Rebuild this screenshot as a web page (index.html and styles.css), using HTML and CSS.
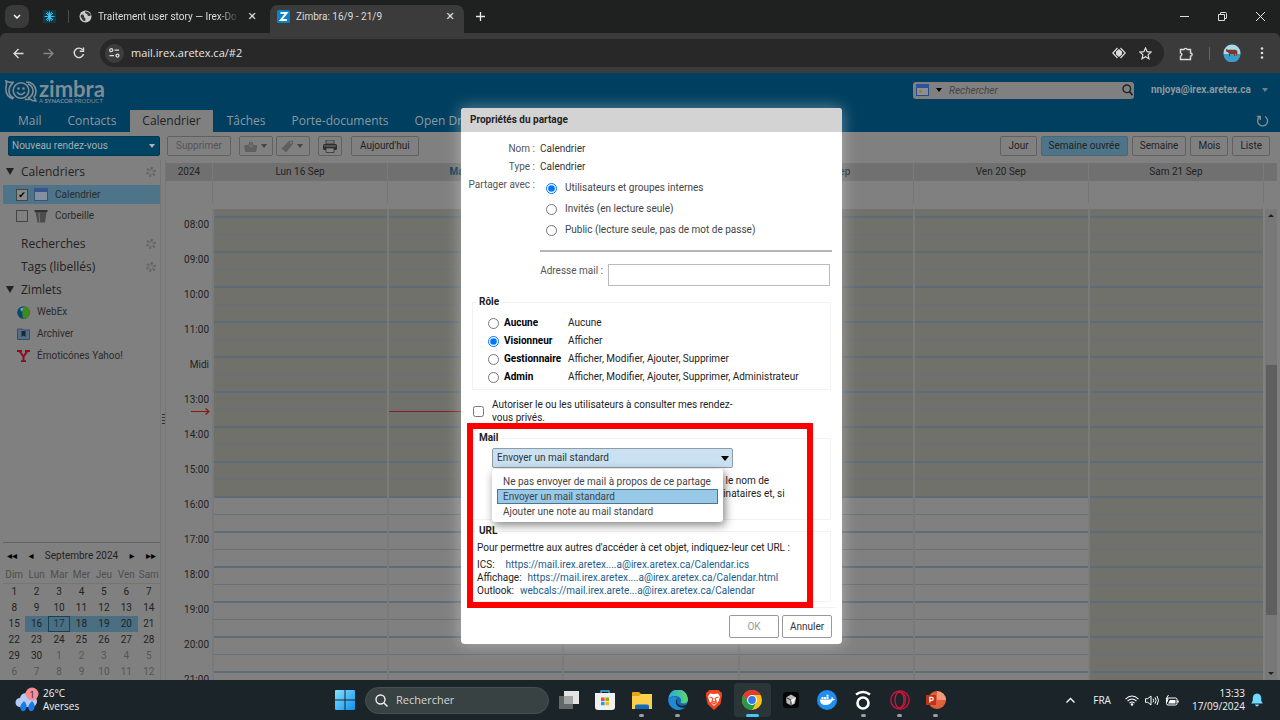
FILE: index.html
```html
<!DOCTYPE html>
<html lang="fr">
<head>
<meta charset="utf-8">
<title>Zimbra: 16/9 - 21/9</title>
<link rel="stylesheet" href="styles.css">
</head>
<body>
<div class="screen">
  <header class="chrome">
    <div class="tabstrip">
      <button class="tab-search" aria-label="Rechercher des onglets"><svg width="8" height="6" viewBox="0 0 8 6"><path d="M1 1l3 3 3-3" fill="none" stroke="#fff" stroke-width="1.5"/></svg></button>
      <span class="pinned"><svg width="13" height="13" viewBox="0 0 13 13"><rect width="13" height="13" fill="#0d3b4d"/><path d="M6.500 1.500v10M1.500 6.500h10M3 3l7 7M10 3l-7 7M4.500 2l4 9M8.500 2l-4 9" stroke="#3fd0f5" stroke-width=".9"/></svg></span>
      <span class="strip-sep"></span>
      <div class="tab">
        <svg width="13" height="13" viewBox="0 0 13 13"><circle cx="6.500" cy="6.500" r="6" fill="#c7cacd"/><path d="M2 5c2-1 3 0 3 1.500S7 8 6.500 10 4 11 3 9 1 7 2 5zM6 1.500c0 2 1 2 2 2.500s0 2 2 2 2-1 1.500-2S8 1 6 1.500z" fill="#33373a"/></svg>
        <span class="tab-title fade">Traitement user story — Irex-Do</span>
        <button class="x" aria-label="Fermer">✕</button>
      </div>
      <div class="tab active">
        <svg width="13" height="13" viewBox="0 0 13 13"><rect width="13" height="13" rx="1.500" fill="#0a84c6"/><path d="M3.500 3h6L4 10h6" fill="none" stroke="#fff" stroke-width="2"/></svg>
        <span class="tab-title">Zimbra: 16/9 - 21/9</span>
        <button class="x" aria-label="Fermer">✕</button>
      </div>
      <button class="newtab" aria-label="Nouvel onglet"><svg width="9" height="9" viewBox="0 0 9 9"><path d="M4.500 0v9M0 4.500h9" stroke="#e8e8e8" stroke-width="1.300"/></svg></button>
      <div class="wincontrols">
        <svg width="9" height="9" viewBox="0 0 9 9"><path d="M0 4.500h9" stroke="#ddd"/></svg>
        <svg width="9" height="9" viewBox="0 0 9 9"><path d="M.5 2.500h6v6h-6zM2.500 2.500v-1.500q0-.5.5-.5h4.500q1 0 1 1v4.500q0 .5-.5.500h-1.500" fill="none" stroke="#ddd"/></svg>
        <svg width="9" height="9" viewBox="0 0 9 9"><path d="M0 0l9 9M9 0l-9 9" stroke="#eee"/></svg>
      </div>
    </div>
    <div class="navbar">
      <button class="nav" aria-label="Précédent"><svg width="11" height="11" viewBox="0 0 11 11"><path d="M10.500 5.500h-9M5.500 1l-4.500 4.500L5.500 10" fill="none" stroke="#ddd" stroke-width="1.300"/></svg></button>
      <button class="nav" aria-label="Suivant"><svg width="11" height="11" viewBox="0 0 11 11"><path d="M.5 5.500h9M5.500 1l4.500 4.500L5.500 10" fill="none" stroke="#858585" stroke-width="1.300"/></svg></button>
      <button class="nav" aria-label="Actualiser"><svg width="12" height="12" viewBox="0 0 12 12"><path d="M10.500 7A4.700 4.700 0 1 1 9.500 2.800M10.500 .5v3.800H6.700" fill="none" stroke="#ddd" stroke-width="1.400"/></svg></button>
      <div class="urlbar">
        <span class="siteinfo"><svg width="11" height="10" viewBox="0 0 11 10"><g fill="none" stroke="#ddd" stroke-width="1.300"><circle cx="2.200" cy="2.200" r="1.500"/><path d="M5.500 2.200H10M.5 7.600H5"/><circle cx="8.500" cy="7.600" r="1.500"/></g></svg></span>
        <input class="url" aria-label="Adresse" value="mail.irex.aretex.ca/#2">
        <svg width="14" height="12" viewBox="0 0 14 12"><path d="M5.500 1L.8 6l4.700 5M8.500 1l4.700 5-4.700 5" fill="none" stroke="#ddd" stroke-width="1.200"/><path d="M7 2L10 4.500v3L7 10 4 7.500v-3z" fill="#ddd"/></svg>
        <svg width="13" height="13" viewBox="0 0 13 13"><path d="M6.500 1l1.600 3.700 4 .4-3 2.700.9 4-3.500-2.100L3 11.800l.9-4-3-2.700 4-.4z" fill="none" stroke="#ddd" stroke-width="1.200"/></svg>
      </div>
      <svg width="15" height="15" viewBox="0 0 15 15"><path d="M1.500 3.500h3.500a1.700 1.700 0 0 1 3.200 0h3.300V7a1.500 1.500 0 0 1 0 3.200v3.300h-10v-3.300a1.700 1.700 0 0 0 0-3.300z" fill="none" stroke="#ddd" stroke-width="1.400"/></svg>
      <span class="nav-sep"></span>
      <svg width="18" height="18" viewBox="0 0 18 18"><circle cx="9" cy="9" r="8.500" fill="#a9d9ee"/><path d="M.5 10h17a8.500 8.500 0 0 1-17 0z" fill="#3d9bc9"/><path d="M3 5l2 .8h7q2 0 2.500 2l-.5 4h-1V9.500l-1 .5v2h-1V10H7v2.500H6V9.500L4.500 8 3 7.500z" fill="#7c3a26"/></svg>
      <svg class="dots" width="4" height="12" viewBox="0 0 4 12"><g fill="#ddd"><circle cx="2" cy="1.500" r="1.300"/><circle cx="2" cy="6" r="1.300"/><circle cx="2" cy="10.500" r="1.300"/></g></svg>
    </div>
  </header>

  <main class="zimbra">
    <div class="banner">
      <div class="brandrow">
        <div class="logo">
          <svg width="33" height="23" viewBox="0 0 33 23"><g fill="none" stroke="#808c94" stroke-width="1.600"><circle cx="16" cy="10.500" r="7.800"/><path d="M9 2Q4 3 1 1q1 3 0 6-1 9 7 12M8 3q-4 3-4 8t5 7M21 2q9 0 10 9 0 4-2 6l2 4q-4 0-6-2-3 1-5 0M23 4q5 2 5 7t-5 7"/><path d="M12 12q4 5 8 0"/></g><circle cx="13.500" cy="8.500" r="1.300" fill="#808c94"/><circle cx="18.500" cy="8.500" r="1.300" fill="#808c94"/></svg>
          <div class="wordmark"><span class="word">zimbra</span><span class="tagline">A <b>SYNACOR</b> PRODUCT</span></div>
        </div>
        <div class="account">
          <div class="searchbox">
            <svg width="13" height="12" viewBox="0 0 13 12"><rect x=".5" y=".5" width="12" height="11" fill="#8a8f98" stroke="#2a4a80"/><path d="M0 0h13v4H0z" fill="#2b529a"/><circle cx="4.500" cy="7.500" r="1.600" fill="#a87a10"/></svg>
            <span class="caret dark"></span>
            <input aria-label="Rechercher" placeholder="Rechercher">
            <svg width="11" height="12" viewBox="0 0 11 12"><circle cx="4.800" cy="4.800" r="3.800" fill="none" stroke="#222" stroke-width="1.400"/><path d="M7.500 7.500l3 3.800" stroke="#222" stroke-width="1.800"/></svg>
          </div>
          <button class="user">nnjoya@irex.aretex.ca <span class="caret pale"></span></button>
        </div>
      </div>
      <nav class="apps">
        <a href="#">Mail</a><a href="#">Contacts</a><a href="#" class="current">Calendrier</a><a href="#">Tâches</a><a href="#">Porte-documents</a><a href="#">Open Drive</a>
        <svg class="refresh" width="13" height="13" viewBox="0 0 13 13"><path d="M9 1.500A5 5 0 1 1 3.500 2M.8 1.500h3.500V5" fill="none" stroke="#808c94" stroke-width="1.400"/></svg>
      </nav>
    </div>
    <div class="toolbar">
      <button class="btn new">Nouveau rendez-vous <span class="caret"></span></button>
      <button class="btn off">Supprimer</button>
      <button class="btn icon move" aria-label="Déplacer"><svg width="14" height="13" viewBox="0 0 14 13"><path d="M1 5h3l1-1h4l1 1h3v2l-1 5H1.500L0 7zM5 4V2h4v2" fill="#606060"/><path d="M7 0v7M4.500 5L7 7.500 9.500 5" stroke="#777" fill="none"/></svg><span class="caret mid"></span></button>
      <button class="btn icon tag" aria-label="Tag"><svg width="13" height="13" viewBox="0 0 13 13"><path d="M8 1l4-.5L12 4l-7 8.500L.5 8.500z" fill="#5f5f5f"/><circle cx="10" cy="2.600" r=".9" fill="#888"/></svg><span class="caret mid"></span></button>
      <button class="btn icon print" aria-label="Imprimer"><svg width="14" height="13" viewBox="0 0 14 13"><path d="M3 0h8v4H3z" fill="#777" stroke="#333" stroke-width=".8"/><rect y="4" width="14" height="6" rx="1.500" fill="#2d2d2d"/><path d="M3 8h8v4.500H3z" fill="#858585" stroke="#333" stroke-width=".8"/><path d="M1 6h12" stroke="#777"/></svg></button>
      <button class="btn">Aujourd'hui</button>
      <div class="views"><button class="btn">Jour</button><button class="btn on">Semaine ouvrée</button><button class="btn">Semaine</button><button class="btn">Mois</button><button class="btn">Liste</button></div>
    </div>
    <div class="workspace">
      <aside class="side">
        <h2><span class="twist"></span>Calendriers<span class="gear"></span></h2>
        <label class="item selected"><input type="checkbox" checked><svg width="14" height="13" viewBox="0 0 14 13"><rect x=".5" y=".5" width="13" height="12" fill="#8490a2" stroke="#3b5273"/><path d="M0 0h14v4H0z" fill="#38548a"/></svg>Calendrier</label>
        <label class="item"><input type="checkbox"><svg width="14" height="14" viewBox="0 0 14 14"><path d="M1.500 3h11l-1.500 10.500H3.500z" fill="#4c4c4c"/><path d="M.5 1h13v2H.5z" fill="#333"/><path d="M5 4l.5 9" stroke="#777"/></svg>Corbeille</label>
        <h2 class="gap">Recherches<span class="gear"></span></h2>
        <h2>Tags (libellés)<span class="gear"></span></h2>
        <h2><span class="twist"></span>Zimlets</h2>
        <a class="zimlet" href="#"><svg width="13" height="13" viewBox="0 0 13 13"><circle cx="6.500" cy="6.500" r="6.300" fill="#0b4570"/><path d="M6.500.2a6.300 6.300 0 0 1 0 12.600Q4 7 6.500.2z" fill="#3f8a1a"/><path d="M3 3q2-2 3.500-1L5 6z" fill="#57a7b8"/></svg>WebEx</a>
        <a class="zimlet" href="#"><svg width="13" height="12" viewBox="0 0 13 12"><path d="M.5 1h5l1 1h6v9.500H.5z" fill="#536f88" stroke="#364f66"/><path d="M4.500 3h4v6l-2-1.500-2 1.500z" fill="#1d2732"/></svg>Archiver</a>
        <a class="zimlet" href="#"><svg width="13" height="12" viewBox="0 0 13 12"><path d="M0 1h5M8 1h5M2.500 1L6.500 6.500 10.500 1M6.500 6v5M4 11.200h5" stroke="#8c0d20" stroke-width="2" fill="none"/></svg>Émoticónes Yahoo!</a>
        <div class="minical">
          <div class="month"><button aria-label="Année précédente">◂◂</button><button aria-label="Mois précédent">◂</button><span>Septembre 2024</span><button aria-label="Mois suivant">▸</button><button aria-label="Année suivante">▸▸</button></div>
          <table>
            <thead><tr><th>Dim</th><th>Lun</th><th>Mar</th><th>Mer</th><th>Jeu</th><th>Ven</th><th>Sam</th></tr></thead>
            <tbody>
            <tr><td>1</td><td>2</td><td>3</td><td>4</td><td>5</td><td>6</td><td>7</td></tr>
            <tr><td>8</td><td>9</td><td>10</td><td>11</td><td>12</td><td>13</td><td>14</td></tr>
            <tr><td>15</td><td class="wk">16</td><td class="wk today">17</td><td class="wk">18</td><td class="wk">19</td><td class="wk">20</td><td>21</td></tr>
            <tr><td>22</td><td>23</td><td>24</td><td>25</td><td>26</td><td>27</td><td>28</td></tr>
            <tr><td>29</td><td>30</td><td class="o">1</td><td class="o">2</td><td class="o">3</td><td class="o">4</td><td class="o">5</td></tr>
            <tr><td class="o">6</td><td class="o">7</td><td class="o">8</td><td class="o">9</td><td class="o">10</td><td class="o">11</td><td class="o">12</td></tr>
            </tbody>
          </table>
        </div>
      </aside>
      <div class="splitter"><span></span></div>
      <section class="week">
        <div class="cols dayheads"><span>2024</span><span>Lun 16 Sep</span><span class="now">Mar 17 Sep</span><span>Mer 18 Sep</span><span>Jeu 19 Sep</span><span>Ven 20 Sep</span><span>Sam 21 Sep</span><span></span></div>
        <div class="cols allday"><span></span><span></span><span></span><span></span><span></span><span></span><span></span><span></span></div>
        <div class="cols hours">
          <div class="times"><span>08:00</span><span>09:00</span><span>10:00</span><span>11:00</span><span>Midi</span><span>13:00</span><span>14:00</span><span>15:00</span><span>16:00</span><span>17:00</span><span>18:00</span><span>19:00</span><span>20:00</span><span>21:00</span>
            <svg class="nowarrow" width="19" height="7" viewBox="0 0 19 7"><path d="M0 3.500h18M14.500.5l3.500 3-3.500 3" fill="none" stroke="#8a1512" stroke-width="1.200"/></svg>
          </div>
          <div class="day"></div><div class="day"><i class="nowline"></i></div><div class="day"></div><div class="day"></div><div class="day"></div><div class="day closed"></div>
          <div class="scroll"><i class="up"></i><i class="thumb"></i><i class="down"></i></div>
        </div>
      </section>
    </div>
  </main>

  <footer class="taskbar">
    <div class="weather">
      <svg width="24" height="26" viewBox="0 0 24 26"><path d="M5 20a4.500 4.500 0 0 1 0-9 6 6 0 0 1 11-2 5 5 0 0 1 1 11z" fill="#b4ccf5"/><path d="M9 14q4 4 2 8t-5 1 3-9zM17 14q4 4 2 8t-5 1 3-9z" fill="#1d78e8"/><circle cx="17" cy="7" r="6.500" fill="#f78d94"/><text x="17" y="10.500" text-anchor="middle" font-size="9" fill="#222">1</text></svg>
      <div>26°C<br>Averses</div>
    </div>
    <svg class="start" width="20" height="20" viewBox="0 0 20 20"><defs><linearGradient id="w" x2="1" y2="1"><stop stop-color="#85e2ff"/><stop offset="1" stop-color="#0c90ee"/></linearGradient></defs><path d="M0 1q0-1 1-1h8.500v9.500H0zM10.500 0H19q1 0 1 1v8.500h-9.500zM0 10.500h9.500V20H1q-1 0-1-1zM10.500 10.500H20V19q0 1-1 1h-8.500z" fill="url(#w)"/></svg>
    <label class="winsearch"><svg width="13" height="13" viewBox="0 0 13 13"><circle cx="5.500" cy="5.500" r="4.500" fill="none" stroke="#eee" stroke-width="1.400"/><path d="M9 9l3.500 3.500" stroke="#eee" stroke-width="1.500"/></svg><input placeholder="Rechercher" aria-label="Rechercher sur l'ordinateur"></label>
    <div class="dock">
      <span><svg viewBox="0 0 20 20"><path d="M0 6h14v13H0z" fill="#626767"/><path d="M5 1h15v13H5z" fill="#e4e4e4"/><path d="M5 6h9v8H5z" fill="#a3a5a5"/></svg></span>
      <span><svg viewBox="0 0 20 20"><path d="M6 4V1h8v3" fill="none" stroke="#38b6e8" stroke-width="1.300"/><path d="M0 3h20v14q0 3-3 3H3q-3 0-3-3z" fill="#f0f0f2"/><path d="M6 7.500h3.600V11H6z" fill="#f05024"/><path d="M10.400 7.500H14V11h-3.600z" fill="#7fba00"/><path d="M6 11.800h3.600v3.500H6z" fill="#1fa0ea"/><path d="M10.400 11.800H14v3.500h-3.600z" fill="#fdb900"/></svg></span>
      <span class="run"><svg viewBox="0 0 20 20"><path d="M0 3q0-1 1-1h6l2 2h10q1 0 1 1v14H0z" fill="#e3a51a"/><path d="M0 6h7l2-2h11v15H0z" fill="#fbce4b"/><path d="M3 19v-3q0-1.500 2-1.500h10q2 0 2 1.500v3z" fill="#0f6cbd"/></svg></span>
      <span class="run"><svg viewBox="0 0 20 20"><defs><linearGradient id="e" x2="1"><stop stop-color="#2ba8e0"/><stop offset="1" stop-color="#5dd86b"/></linearGradient></defs><circle cx="10" cy="10" r="9.800" fill="#1468b8"/><path d="M.3 9A9.800 9.800 0 0 1 20 9.500q0 4-4.500 4-3.500 0-3-1.500 1-1 .5-2.800Q11.500 6 7 6 2 6.200.3 9z" fill="url(#e)"/><path d="M9.500 8.500q-2 4 1.500 6.500 3 1.500 7.500 0l1.500-1.500v2l-3 3q-6 1-9-3-2-4 1.500-7z" fill="#17262a"/><path d="M9.500 8q-3 3-1 6.500 2.500 4 9 3-5 4-11.500 1.500Q0 15.500.4 9q4-4 9.100-1z" fill="#1c8ad6"/></svg></span>
      <span><svg viewBox="0 0 20 20"><path d="M5.500 0h9L16.500 2l1.300.5.200 3-1.500 8.500L10 20 3.500 14 2 5.500l.2-3L3.500 2z" fill="#f4441f"/><path d="M10 4l4-.5 2 3-1.500 5L10 16l-4.500-4.500L4 6.500l2-3z" fill="#fff"/><path d="M5.500 7l3 1M14.500 7l-3 1M9 8l-1 3 2 1 2-1-1-3M7 12l3 2 3-2" fill="none" stroke="#f4441f" stroke-width="1.200"/></svg></span>
      <span class="run cur"><svg viewBox="0 0 20 20"><circle cx="10" cy="10" r="10" fill="#fbc116"/><path d="M1.340 5L6 13l4-3V5h8.700A10 10 0 0 0 1.340 5z" fill="#e33b2e"/><path d="M1.340 5A10 10 0 0 0 10 20l4.300-7.500H6z" fill="#229a49"/><circle cx="10" cy="10" r="4.900" fill="#fff"/><circle cx="10" cy="10" r="3.900" fill="#3379e8"/></svg></span>
      <span><svg viewBox="0 0 20 20"><rect x="2" y="2" width="16" height="16" rx="3" fill="#050505"/><path d="M10 4.500l5 3-1 6-4 2-4.500-2.500L5 7.500z" fill="#bbb"/><path d="M5 7.500l5 2.500v5.500" fill="none" stroke="#333"/><path d="M10 10l5-2.500-3.500 7z" fill="#fff"/></svg></span>
      <span><svg viewBox="0 0 20 20"><circle cx="10" cy="10" r="10" fill="#1f8ef0"/><path d="M3 9.500h11q1-1.500.5-3 1.500.7 1.500 2.200 1 0 2 .3-.7 1.500-2.500 1.500Q13.500 15 8.500 15 3 15 3 9.500zM4.500 7h2v2h-2zM7 7h2v2H7zM9.500 7h2v2h-2zM9.500 4.700h2v2h-2z" fill="#fff"/></svg></span>
      <span class="run"><svg viewBox="0 0 20 20"><circle cx="10" cy="13" r="5.500" fill="none" stroke="#fff" stroke-width="2.600"/><path d="M3 4.500q7-5 14 0" fill="none" stroke="#fff" stroke-width="2.300"/></svg></span>
      <span class="run"><svg viewBox="0 0 20 20"><g fill="none" stroke="#d2143f" stroke-width="1.300"><circle cx="10" cy="10" r="9.200"/><ellipse cx="9.500" cy="10" rx="4.500" ry="8"/><path d="M9 2q7 1 6.500 8T10 18"/></g></svg></span>
      <span class="run"><svg viewBox="0 0 20 20"><circle cx="11" cy="10" r="9" fill="#e0603c"/><path d="M11 1a9 9 0 0 1 9 9h-9z" fill="#f5977b"/><path d="M0 5h10v10H0z" fill="#bd3518"/><path d="M3.800 12.500V7.400h1.800q1.600 0 1.600 1.500t-1.600 1.500H3.800" fill="none" stroke="#fff" stroke-width="1.200"/></svg></span>
    </div>
    <div class="tray">
      <svg width="9" height="6" viewBox="0 0 9 6"><path d="M.5 5.500l4-4 4 4" fill="none" stroke="#fff" stroke-width="1.300"/></svg>
      <span class="lang">FRA</span>
      <svg width="14" height="11" viewBox="0 0 14 11"><g fill="none" stroke="#fff" stroke-width="1.100"><path d="M.5 4.200q6.500-6.400 13 0M2.500 6.200q4.500-4.400 9 0M4.500 8.200q2.500-2.400 5 0"/></g><circle cx="7" cy="9.500" r="1.200" fill="#fff"/></svg>
      <svg width="14" height="11" viewBox="0 0 14 11"><path d="M.5 3.700h2.200L6 1v9L2.700 7.300H.5zM8 3.700q1.300 1.800 0 3.600M10 2.300q2.300 3.200 0 6.400M12 1q3 4.500 0 9" fill="none" stroke="#fff"/></svg>
      <svg width="14" height="11" viewBox="0 0 14 11"><rect x="1.500" y="3" width="10.500" height="7" rx="1.500" fill="none" stroke="#fff"/><path d="M3 8.500L5 5h5.500v3.500z" fill="#fff"/><path d="M13 5.500v2" stroke="#fff" stroke-width="1.500"/><path d="M3.500 0L1 4h2l-1 3" fill="none" stroke="#fff"/></svg>
      <div class="clock">13:33<br>17/09/2024</div>
      <svg width="12" height="14" viewBox="0 0 12 14"><path d="M6 .5q4 .3 4.200 4.500v2.500L11.700 10.500H.3L1.800 7.500V5Q2 .8 6 .5zM4 11.500h4q-.5 2-2 2t-2-2z" fill="#6fdcff"/></svg>
    </div>
  </footer>

  <form class="dialog">
    <h1>Propriétés du partage</h1>
    <div class="props">
      <span class="k">Nom :</span><span class="v">Calendrier</span>
      <span class="k">Type :</span><span class="v">Calendrier</span>
      <span class="k">Partager avec :</span>
      <div class="who">
        <label><input type="radio" name="who" checked>Utilisateurs et groupes internes</label>
        <label><input type="radio" name="who">Invités (en lecture seule)</label>
        <label><input type="radio" name="who">Public (lecture seule, pas de mot de passe)</label>
      </div>
    </div>
    <hr>
    <div class="address"><label for="mail">Adresse mail :</label><input id="mail" type="text"></div>
    <fieldset class="role">
      <legend>Rôle</legend>
      <label><input type="radio" name="role"><b>Aucune</b><span>Aucune</span></label>
      <label><input type="radio" name="role" checked><b>Visionneur</b><span>Afficher</span></label>
      <label><input type="radio" name="role"><b>Gestionnaire</b><span>Afficher, Modifier, Ajouter, Supprimer</span></label>
      <label><input type="radio" name="role"><b>Admin</b><span>Afficher, Modifier, Ajouter, Supprimer, Administrateur</span></label>
    </fieldset>
    <label class="private"><input type="checkbox"><span>Autoriser le ou les utilisateurs à consulter mes rendez-<br>vous privés.</span></label>
    <fieldset class="mailset">
      <legend>Mail</legend>
      <div class="combo">
        <select aria-label="Mail"><option>Envoyer un mail standard</option></select><span class="caret black"></span>
        <ul class="menu"><li>Ne pas envoyer de mail à propos de ce partage</li><li class="hot">Envoyer un mail standard</li><li>Ajouter une note au mail standard</li></ul>
      </div>
      <p class="note">Remarque : le message standard indique votre nom, le nom de<br>l'objet partagé, les autorisations accordées aux destinataires et, si<br>besoin, les informations.</p>
    </fieldset>
    <fieldset class="urls">
      <legend>URL</legend>
      <p>Pour permettre aux autres d'accéder à cet objet, indiquez-leur cet URL :</p>
      <div class="link wide"><span>ICS:</span><a href="#">https://mail.irex.aretex....a@irex.aretex.ca/Calendar.ics</a></div>
      <div class="link"><span>Affichage:</span><a href="#">https://mail.irex.aretex....a@irex.aretex.ca/Calendar.html</a></div>
      <div class="link"><span>Outlook:</span><a href="#">webcals://mail.irex.arete...a@irex.aretex.ca/Calendar</a></div>
    </fieldset>
    <div class="actions"><button type="button" disabled>OK</button><button type="button">Annuler</button></div>
    <div class="highlight"></div>
  </form>
</div>
</body>
</html>
```

FILE: styles.css
```css
* { box-sizing: border-box; }
body { margin: 0; font: 10px/14px Roboto, "Open Sans", sans-serif; color: #222; }
button, input, select { font: inherit; color: inherit; margin: 0; padding: 0; border: 0; background: none; outline: 0; }
h1, h2, p, ul { margin: 0; padding: 0; }
a { color: inherit; text-decoration: none; }
svg { display: block; flex: none; }
.screen { position: relative; height: 100vh; display: flex; flex-direction: column; overflow: hidden; }

.chrome { background: #1f2120; color: #e6e6e6; }
.tabstrip { height: 33px; display: flex; align-items: center; padding-left: 5px; }
.tab-search { width: 24px; height: 23px; border-radius: 8px; background: #3a3a3a; display: grid; place-items: center; }
.pinned { margin-left: 14px; }
.strip-sep { width: 1px; height: 13px; background: #4c4c4c; margin-left: 12px; }
.tab { display: flex; align-items: center; gap: 6px; width: 197px; height: 28px; padding: 0 8px 0 10px; margin-top: 5px; }
.tab svg { margin-bottom: 5px; }
.tab-title { flex: 1; min-width: 0; white-space: nowrap; overflow: hidden; padding-bottom: 5px; color: #dcdcdc; }
.fade { -webkit-mask-image: linear-gradient(90deg, #000 120px, transparent 142px); mask-image: linear-gradient(90deg, #000 120px, transparent 142px); }
.tab.active { width: 194px; margin-left: 4px; background: #3b3b3b; border-radius: 8px 8px 0 0; padding: 0 8px 0 7px; }
.x { font: 11px/14px "DejaVu Sans", sans-serif; padding-bottom: 5px; width: 12px; }
.newtab { margin-left: 12px; }
.wincontrols { margin-left: auto; display: flex; gap: 29px; padding-right: 15px; }
.navbar { height: 40px; background: #3b3b3b; border-radius: 6px 6px 0 0; display: flex; align-items: center; padding: 0 16px 0 13px; }
.nav { width: 30px; display: flex; }
.urlbar { flex: 1; height: 28px; margin: 0 15px 0 -3px; border-radius: 14px; background: #282828; display: flex; align-items: center; gap: 13px; padding: 0 12px 0 5px; }
.siteinfo { width: 19px; height: 19px; border-radius: 50%; background: #3d3d3d; display: grid; place-items: center; }
.url { flex: 1; margin-left: -6px; font: 11px/20px "Open Sans", sans-serif; }
.nav-sep { width: 1px; height: 13px; background: #656565; margin: 0 13px 0 15px; }
.dots { margin-left: 19px; }

.zimbra { flex: 1; min-height: 0; display: flex; flex-direction: column; background: #808080; }
.banner { background: #003f60; color: #8c999f; height: 59px; display: flex; flex-direction: column; justify-content: space-between; }
.brandrow { display: flex; justify-content: space-between; padding: 7px 12px 0 5px; }
.logo { display: flex; gap: 1px; }
.wordmark { display: flex; flex-direction: column; color: #808c94; }
.word { font: 700 22px/18px Lato, sans-serif; }
.tagline { font: 6px/6px Lato, sans-serif; }
.account { display: flex; align-items: center; height: 20px; gap: 17px; }
.searchbox { display: flex; align-items: center; width: 221px; height: 17px; border-radius: 3px; background: #808080; padding: 0 1px 0 3px; gap: 7px; }
.searchbox input { flex: 1; min-width: 0; font-style: italic; line-height: 15px; }
.searchbox input::placeholder { color: #444; opacity: 1; }
.user { display: flex; align-items: center; justify-content: space-between; width: 117px; font-weight: 700; }
.caret { flex: none; width: 0; height: 0; border: 3px solid transparent; border-top: 4px solid #aab4b8; border-bottom: 0; }
.caret.dark, .caret.black { border-top-color: #000; }
.caret.mid { border-top-color: #444; }
.caret.pale { border-top-color: #6d8291; }
.apps { display: flex; gap: 2px; padding-left: 6px; font: 12px/22px "Open Sans", sans-serif; height: 22px; align-items: center; }
.apps a { padding: 0 12px; white-space: nowrap; }
.apps .current { background: #808080; color: #222; }
.refresh { margin-left: auto; margin-right: 11px; }

.toolbar { display: flex; align-items: center; height: 28px; padding: 0 10px 0 8px; }
.btn { height: 20px; border: 1px solid #606060; border-radius: 2px; padding: 0 8px; white-space: nowrap; display: flex; align-items: center; }
.btn.new { width: 152px; justify-content: space-between; background: #004463; border-color: #00384f; color: #a4aeb2; padding: 0 4px 0 3px; margin-right: 7px; }
.btn.off { color: #555; margin-right: 8px; }
.btn.icon { gap: 3px; padding: 0 4px; }
.btn.move { width: 34px; margin-right: 3px; }
.btn.tag { width: 34px; margin-right: 8px; }
.btn.print { width: 24px; margin-right: 9px; }
.views { margin-left: auto; display: flex; gap: 4px; }
.views .btn { padding: 0 7px; }
.btn.on { background: #4d7488; border-color: #4c6674; }

.workspace { flex: 1; min-height: 0; display: flex; }
.side { width: 160px; padding-left: 3px; display: flex; flex-direction: column; }
.side h2 { display: flex; align-items: center; position: relative; font: 12px/16px "Open Sans", sans-serif; height: 23px; padding-left: 18px; }
.side h2.gap { margin-top: 6px; }
.twist { position: absolute; left: 3px; border: 4px solid transparent; border-top: 7px solid #222; border-bottom: 0; }
.gear { margin-left: auto; margin-right: 4px; width: 10px; height: 10px; border: 2px dotted #636363; border-radius: 50%; outline: 1px solid #6d6d6d; outline-offset: -3px; }
.item { display: flex; align-items: center; gap: 6px; height: 21px; padding-left: 13px; color: #2b2b2b; }
.item svg { margin-right: 1px; }
.item.selected { background: #4d7488; height: 19px; margin: 2px 0 1px; }
.item input { appearance: none; width: 12px; height: 12px; border: 1px solid #444; display: grid; place-items: center; }
.item input:checked { background: #8a8a8a; }
.item input:checked::after { content: "✔"; font: 9px/10px "DejaVu Sans", sans-serif; color: #000; }
.zimlet { display: flex; align-items: center; gap: 7px; height: 22px; padding-left: 14px; color: #2b2b2b; }
.minical { margin-top: auto; border-top: 1px solid #606060; }
.month { display: flex; justify-content: space-between; height: 25px; align-items: center; padding: 0 4px; }
.month button { font: 10px/12px "DejaVu Sans", sans-serif; color: #000; }
.minical table { border-collapse: collapse; width: 100%; table-layout: fixed; text-align: center; }
.minical th { font-weight: 400; color: #4f4f4f; padding: 0 0 1px; line-height: 14px; border-bottom: 1px solid #757575; }
.minical td { padding: 1px 0; line-height: 14px; height: 16px; }
.minical .wk { background: #4a6f82; }
.minical .today { outline: 1px solid #163f58; outline-offset: -1px; color: #113b55; }
.minical .o { color: #555; }
.splitter { width: 6px; border: 1px solid #767676; border-width: 0 1px; display: flex; align-items: center; }
.splitter span { width: 3px; height: 12px; margin: 0 auto; background: repeating-linear-gradient(#333 0 1px, transparent 1px 3px); }

.week { flex: 1; display: flex; flex-direction: column; min-width: 0; padding-top: 3px; }
.cols { display: grid; grid-template-columns: 46px repeat(6, 1fr) 17px; }
.dayheads { background: #707070; height: 18px; text-align: center; line-height: 18px; margin-right: 3px; grid-template-columns: 46px repeat(6, 1fr) 14px; }
.dayheads span + span, .allday span + span { border-left: 1px solid #7a7a7a; }
.dayheads .now { font-weight: 700; color: #0b3c58; }
.allday { height: 22px; margin-bottom: 6px; }
.allday span + span { border-color: #757575; }
.hours { flex: 1; min-height: 0; overflow: hidden; grid-template-rows: 100%; }
.times { position: relative; text-align: right; padding: 9px 3px 0 0; }
.times span { display: block; height: 35px; }
.nowarrow { position: absolute; right: 2px; top: 199px; }
.day { position: relative; border-left: 2px solid #7a7a7a;
  background:
    repeating-linear-gradient(transparent 0 7px, #5e6c78 7px 9px, transparent 9px 25px, #66707a 25px 26px, transparent 26px 35px),
    linear-gradient(#70716b 288px, #808080 288px); }
.day.closed { background:
    repeating-linear-gradient(transparent 0 7px, #5e6c78 7px 9px, transparent 9px 25px, #66707a 25px 26px, transparent 26px 35px),
    #70716b; }
.nowline { position: absolute; left: 0; right: 0; top: 202px; height: 1px; background: #8a1f1b; }
.scroll { margin-left: 2px; margin-right: 3px; background: #787878; display: flex; flex-direction: column; align-items: center; padding: 5px 0; }
.scroll i { border: 3px solid transparent; }
.scroll .up { border-top: 0; border-bottom-color: #222; }
.scroll .thumb { border: 0; width: 11px; height: 250px; background: #5f5f5f; margin-top: 148px; }
.scroll .down { border-bottom: 0; border-top-color: #222; margin-top: auto; }

.taskbar { height: 40px; background: #1b2529; color: #f2f2f2; display: flex; align-items: center; flex: none; font-family: "Open Sans", sans-serif; }
.weather { width: 335px; display: flex; align-items: center; gap: 4px; padding-left: 15px; line-height: 13px; }
.winsearch { display: flex; align-items: center; gap: 8px; width: 184px; height: 27px; border-radius: 14px; background: #384243; border: 1px solid #465152; margin-left: 10px; padding-left: 9px; }
.winsearch input { width: 130px; font-size: 11px; line-height: 20px; }
.winsearch input::placeholder { color: #d5d5d5; opacity: 1; }
.dock { width: 403px; height: 100%; display: flex; margin-left: 2px; }
.dock span { flex: 1; position: relative; display: grid; place-items: center; }
.dock svg { width: 20px; height: 20px; }
.dock .cur { background: #2b3639; border-radius: 4px; margin: 3px 2px; }
.run::after { content: ""; position: absolute; bottom: 3px; width: 5px; height: 3px; border-radius: 2px; background: #9a9fa0; }
.cur::after { bottom: 0; width: 13px; background: #4cc2ff; }
.tray { margin-left: auto; display: flex; align-items: center; gap: 6px; padding-right: 17px; }
.lang { margin: 0 8px 0 12px; }
.clock { text-align: right; line-height: 13px; margin-left: 7px; }

.dialog { position: absolute; left: 461px; top: 108px; width: 381px; background: #fff; border-radius: 4px; box-shadow: 0 0 15px 1px rgba(255,255,255,.35); color: #333; padding-bottom: 6px; }
.dialog h1 { font-size: 10px; line-height: 24px; height: 24px; font-weight: 700; background: #d3d3d3; border-radius: 3px 3px 0 0; padding-left: 9px; color: #222; }
.dialog input[type="radio"], .dialog input[type="checkbox"] { width: 11px; height: 11px; flex: none; }
.props { display: grid; grid-template-columns: 74px 1fr; column-gap: 5px; row-gap: 4px; padding-top: 10px; }
.props .k { text-align: right; color: #555; white-space: nowrap; }
.who { display: flex; flex-direction: column; gap: 7px; padding: 3px 0 0 6px; color: #444; }
.who label { display: flex; align-items: center; gap: 8px; }
.dialog hr { border: 0; height: 2px; background: #b5b5b5; margin: 13px 10px 12px 79px; }
.address { display: flex; gap: 5px; justify-content: flex-end; padding-right: 12px; color: #555; }
.address input { width: 222px; height: 22px; border: 1px solid #bbb; }
.dialog fieldset { margin: 0 11px; padding: 0; border: 1px solid #f2f2f2; min-width: 0; color: #222; }
.dialog legend { margin-left: 4px; padding: 0 2px; font-weight: 700; line-height: 14px; }
.dialog .role { height: 95px; margin-top: 9px; }
.role label { display: grid; grid-template-columns: 11px 59px 1fr; column-gap: 5px; align-items: center; padding-left: 15px; height: 18px; }
.role legend + label { margin-top: 5px; }
.role b { color: #000; }
.private { display: flex; align-items: center; gap: 8px; margin: 8px 0 7px 12px; line-height: 13px; color: #222; white-space: nowrap; }
.dialog .mailset { height: 89px; }
.combo { position: relative; width: 241px; margin: 3px 0 0 19px; }
.combo select { appearance: none; display: block; width: 100%; height: 20px; background: #cae1f1; border: 1px solid #8f9ca6; border-radius: 2px; padding-left: 4px; color: #333; }
.combo .caret { position: absolute; right: 4px; top: 8px; border-width: 5px 4px 0; }
.menu { position: absolute; z-index: 1; left: 0; top: 21px; width: 231px; padding: 5px 5px 3px; background: #fff; border-radius: 3px; box-shadow: 2px 3px 10px rgba(0,0,0,.5); list-style: none; color: #444; }
.menu li { line-height: 15px; padding-left: 6px; white-space: nowrap; }
.menu .hot { background: #98c9e8; outline: 1px solid #4d7691; outline-offset: -1px; }
.note { padding: 6px 0 0 20px; line-height: 13px; white-space: nowrap; }
.dialog .urls { height: 78px; margin-top: 4px; padding-left: 4px; }
.dialog .urls legend { margin-left: 0; }
.urls p { margin: 3px 0; white-space: nowrap; }
.link { display: flex; gap: 6px; line-height: 13px; white-space: nowrap; }
.link.wide { gap: 11px; }
.link a { color: #1b5c8c; }
.actions { display: flex; justify-content: flex-end; gap: 3px; margin: 5px 6px 0; padding: 7px 4px 0 0; border-top: 1px solid #f2f2f2; }
.actions button { width: 50px; height: 23px; border: 1px solid #999; border-radius: 2px; color: #333; }
.actions button:disabled { color: #999; }
.highlight { position: absolute; z-index: 2; left: 6px; top: 315px; width: 346px; height: 185px; border: 6px solid #f00; pointer-events: none; }
```
